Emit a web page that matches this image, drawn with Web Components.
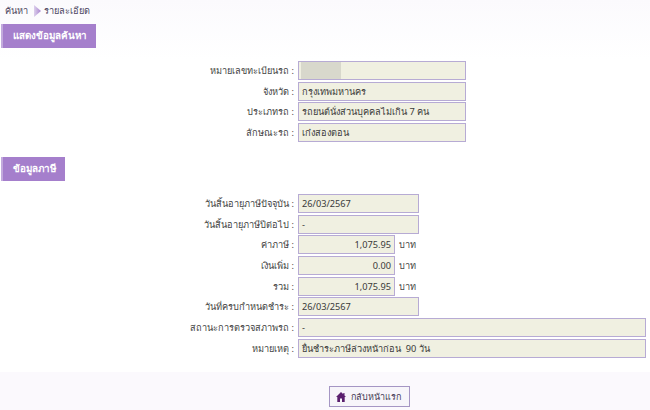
<!DOCTYPE html>
<html>
  <head>
    <style>
      html, body { margin: 0; padding: 0; }
      body {
        width: 650px;
        height: 410px;
        overflow: hidden;
        background: #fff;
        font: 9.200px "Noto Sans", "DejaVu Sans", sans-serif;
        color: #444;
      }
    </style>
  </head>

  <body>
    <tax-page>
      <bread-crumb slot="crumb"></bread-crumb>

      <section-head>แสดงข้อมูลค้นหา</section-head>
      <field-list style="margin-top:13px">
        <field-row label="หมายเลขทะเบียนรถ :" width="168"><mask-blur></mask-blur></field-row>
        <field-row label="จังหวัด :" width="168">กรุงเทพมหานคร</field-row>
        <field-row label="ประเภทรถ :" width="168">รถยนต์นั่งส่วนบุคคลไม่เกิน 7 คน</field-row>
        <field-row label="ลักษณะรถ :" width="168">เก๋งสองตอน</field-row>
      </field-list>

      <section-head style="margin-top:15px">ข้อมูลภาษี</section-head>
      <field-list style="margin-top:13px">
        <field-row label="วันสิ้นอายุภาษีปัจจุบัน :" width="121">26/03/2567</field-row>
        <field-row label="วันสิ้นอายุภาษีปีต่อไป :" width="121">-</field-row>
        <field-row label="ค่าภาษี :" width="97" align="right" unit="บาท">1,075.95</field-row>
        <field-row label="เงินเพิ่ม :" width="97" align="right" unit="บาท">0.00</field-row>
        <field-row label="รวม :" width="97" align="right" unit="บาท">1,075.95</field-row>
        <field-row label="วันที่ครบกำหนดชำระ :" width="121">26/03/2567</field-row>
        <field-row label="สถานะการตรวจสภาพรถ :" width="348">-</field-row>
        <field-row label="หมายเหตุ :" width="348">ยื่นชำระภาษีล่วงหน้าก่อน&nbsp; 90 วัน</field-row>
      </field-list>

      <home-button slot="foot">กลับหน้าแรก</home-button>
    </tax-page>

    <script>
      customElements.define("tax-page", class extends HTMLElement {
        constructor() {
          super();
          this.attachShadow({ mode: "open" }).innerHTML = `
            <style>
              :host {
                display: flex;
                flex-direction: column;
                height: 410px;
                background: linear-gradient(#fbfafd 0, #fff 60px);
              }
              .top { padding: 4px 0 0 5px; height: 20px; box-sizing: border-box; }
              main { flex: 1; }
              .foot {
                display: flex;
                justify-content: center;
                height: 38px;
                box-sizing: border-box;
                padding: 14px 0 0 88px;
                background: #fbf9fd;
              }
            </style>
            <div class="top"><slot name="crumb"></slot></div>
            <main><slot></slot></main>
            <div class="foot"><slot name="foot"></slot></div>
          `;
        }
      });

      customElements.define("bread-crumb", class extends HTMLElement {
        constructor() {
          super();
          this.attachShadow({ mode: "open" }).innerHTML = `
            <style>
              :host { display: flex; align-items: center; height: 13px; color: #4c4560; }
              svg { margin: 0 3px 0 6px; }
            </style>
            <span>ค้นหา</span>
            <svg width="7" height="12" viewBox="0 0 7 12">
              <defs><linearGradient id="a"><stop offset="0" stop-color="#ddd0ec"/><stop offset="1" stop-color="#a884cf"/></linearGradient></defs>
              <path d="M0 0l7 6-7 6z" fill="url(#a)"/>
            </svg>
            <span>รายละเอียด</span>
          `;
        }
      });

      customElements.define("section-head", class extends HTMLElement {
        constructor() {
          super();
          this.attachShadow({ mode: "open" }).innerHTML = `
            <style>
              :host {
                display: table;
                margin: 4px 0 0 1px;
                height: 24px;
                line-height: 23px;
                padding: 0 9px 0 10px;
                background: #a57fcc;
                border-left: 2px solid #c2aadd;
                color: #fff;
                font-size: 9.800px;
                font-weight: bold;
              }
            </style>
            <slot></slot>
          `;
        }
      });

      customElements.define("field-list", class extends HTMLElement {
        constructor() {
          super();
          this.attachShadow({ mode: "open" }).innerHTML = `
            <style>
              :host { display: grid; row-gap: 1.670px; }
            </style>
            <slot></slot>
          `;
        }
      });

      customElements.define("field-row", class extends HTMLElement {
        constructor() {
          super();
          const width = this.getAttribute("width");
          const align = this.getAttribute("align") || "left";
          const unit = this.getAttribute("unit");
          this.attachShadow({ mode: "open" }).innerHTML = `
            <style>
              :host { display: flex; align-items: center; height: 19px; }
              .label { box-sizing: border-box; width: 298px; padding-right: 4px; text-align: right; white-space: nowrap; }
              .value {
                box-sizing: border-box;
                width: ${width}px;
                height: 19px;
                line-height: 17px;
                padding: 0 3px;
                text-align: ${align};
                background: #f0f0e1;
                border: 1px solid #b7abd4;
                color: #3a3a3a;
                white-space: nowrap;
                position: relative;
              }
              .unit { margin-left: 4px; }
            </style>
            <span class="label">${this.getAttribute("label")}</span>
            <span class="value"><slot></slot></span>
            ${unit ? `<span class="unit">${unit}</span>` : ""}
          `;
        }
      });

      // the blurred-out plate number
      customElements.define("mask-blur", class extends HTMLElement {
        constructor() {
          super();
          this.attachShadow({ mode: "open" }).innerHTML = `
            <style>
              :host { position: absolute; left: 2px; top: 0; bottom: 0; width: 40px; background: #d8d8cc; }
            </style>
          `;
        }
      });

      customElements.define("home-button", class extends HTMLElement {
        constructor() {
          super();
          this.attachShadow({ mode: "open" }).innerHTML = `
            <style>
              :host {
                display: flex;
                align-items: center;
                box-sizing: border-box;
                width: 81px;
                height: 21px;
                padding-left: 6px;
                gap: 5px;
                background: #f7f5fa;
                border: 1px solid #a596c4;
                color: #443a55;
                font-size: 9px;
                white-space: nowrap;
              }
            </style>
            <svg width="10" height="10" viewBox="0 0 10 10"><path d="M5 0L0 5h1.300v5h2.700V6.500h2V10h2.700V5H10L8.500 3.500V1H7.300v1.300z" fill="#5a1f6e"/></svg>
            <slot></slot>
          `;
        }
      });
    </script>
  </body>
</html>
